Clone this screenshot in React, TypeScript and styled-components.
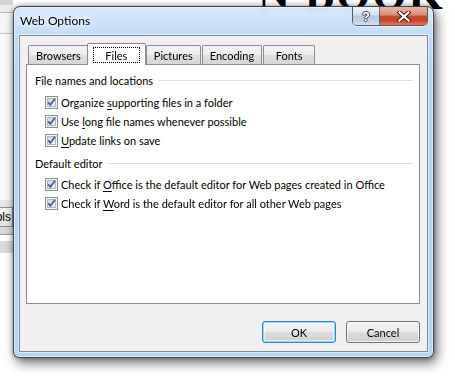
import React from "react";
import styled, { createGlobalStyle, css } from "styled-components";

const UI_FONT = `Lato, "Noto Sans", "Liberation Sans", sans-serif`;

const GlobalStyle = createGlobalStyle`
  html, body { margin: 0; padding: 0; background: #ffffff; }
  body { width: 455px; height: 378px; overflow: hidden; font-family: ${UI_FONT}; font-size: 11px; color: #000; }
  * { box-sizing: border-box; }
`;

const Desktop = styled.div`
  position: relative;
  width: 455px;
  height: 378px;
  overflow: hidden;
  background: #ffffff;
`;

/* ---------- application behind the dialog ---------- */
const BackApp = styled.div`
  position: absolute;
  left: 0;
  top: 0;
  width: 13px;
  height: 378px;
  overflow: hidden;
  display: flex;
  flex-direction: column;
`;

const Band = styled.div<{ $h: number; $bg: string }>`
  flex: none;
  height: ${(p) => p.$h}px;
  background: ${(p) => p.$bg};
`;

const ToolBand = styled.div`
  flex: none;
  height: 34px;
  display: flex;
  justify-content: flex-end;
  align-items: center;
  background: linear-gradient(#e9e9e9, #d6d6d6);
`;

const ToolsButton = styled.div`
  flex: none;
  height: 20px;
  line-height: 18px;
  padding: 0 1px 0 4px;
  border: 1px solid #8c8c8c;
  background: linear-gradient(#f7f7f7, #e3e3e3);
  font-family: "Liberation Sans", sans-serif;
  font-size: 12px;
  white-space: nowrap;
`;

const BackTitle = styled.div`
  position: absolute;
  left: 258px;
  top: -27px;
  font-family: "Liberation Serif", serif;
  font-weight: bold;
  font-size: 44px;
  line-height: 44px;
  letter-spacing: 2px;
  white-space: nowrap;
  color: #000;
`;

/* ---------- the dialog window ---------- */
const Window = styled.div`
  position: absolute;
  left: 13px;
  top: 6px;
  width: 421px;
  height: 352px;
  display: flex;
  flex-direction: column;
  padding: 0 5px 5px 5px;
  border: 1px solid rgba(35, 45, 60, 0.85);
  border-radius: 7px 7px 6px 6px;
  background:
    linear-gradient(180deg, rgba(255, 255, 255, 0.5) 0px, rgba(255, 255, 255, 0.2) 26px, rgba(255, 255, 255, 0) 60px),
    rgba(168, 204, 242, 0.85);
  backdrop-filter: blur(3px);
  box-shadow:
    inset 0 0 0 1px rgba(255, 255, 255, 0.55),
    3px 5px 12px rgba(0, 0, 0, 0.55),
    0 0 5px rgba(0, 0, 0, 0.35);
`;

const TitleBar = styled.div`
  flex: none;
  height: 28px;
  display: flex;
  align-items: flex-start;
  justify-content: space-between;
  padding-left: 1px;
`;

const Title = styled.div`
  margin-top: 7px;
  height: 14px;
  line-height: 14px;
  font-size: 12px;
  color: #000;
  text-shadow: 0 0 6px #fff, 0 0 10px rgba(255, 255, 255, 0.9);
`;

const CaptionGroup = styled.div`
  display: flex;
  height: 19px;
  border: 1px solid rgba(45, 55, 75, 0.8);
  border-top: none;
  border-radius: 0 0 5px 5px;
  overflow: hidden;
  box-shadow: 0 1px 0 rgba(255, 255, 255, 0.6);
`;

const CaptionButton = styled.div<{ $kind: "help" | "close" }>`
  display: flex;
  align-items: center;
  justify-content: center;
  height: 100%;
  ${(p) =>
    p.$kind === "help"
      ? css`
          width: 27px;
          border-right: 1px solid rgba(45, 55, 75, 0.7);
          background: linear-gradient(#eef3f9 0%, #d4dfeb 45%, #b7c8dc 50%, #c3d3e5 80%, #d7e3f0 100%);
        `
      : css`
          width: 47px;
          background: linear-gradient(#eeb3a3 0%, #dd8b74 45%, #c9492e 50%, #c6452a 75%, #de7b5c 100%);
        `}
`;

const HelpGlyph = styled.span`
  font-family: "Liberation Sans", sans-serif;
  font-weight: bold;
  font-size: 13px;
  line-height: 13px;
  color: #fff;
  text-shadow: 1px 0 0 #3d4a5c, -1px 0 0 #3d4a5c, 0 1px 0 #3d4a5c, 0 -1px 0 #3d4a5c;
`;

/* ---------- client area ---------- */
const Client = styled.div`
  flex: 1;
  display: flex;
  flex-direction: column;
  background: #f0f0f0;
  border: 1px solid #7b8b9d;
  box-shadow: 0 0 0 1px rgba(255, 255, 255, 0.5);
  padding: 7px 7px 8px 6px;
`;

const TabStrip = styled.div`
  flex: none;
  height: 21px;
  display: flex;
  align-items: flex-end;
  gap: 1px;
  padding-left: 2px;
  position: relative;
  z-index: 1;
`;

const Tab = styled.div<{ $active?: boolean }>`
  flex: none;
  min-width: 52px;
  height: 19px;
  padding: 0 7px;
  display: flex;
  align-items: center;
  justify-content: center;
  border: 1px solid #898c95;
  border-bottom: none;
  border-radius: 2px 2px 0 0;
  background: linear-gradient(#f4f4f4 0%, #ececec 50%, #e0e0e0 51%, #d6d6d6 100%);
  white-space: nowrap;
  ${(p) =>
    p.$active &&
    css`
      height: 22px;
      min-width: 59px;
      margin: 0 -1px -1px -3px;
      padding: 3px 5px 2px 5px;
      background: #ffffff;
      align-items: stretch;
    `}
`;

const FocusLabel = styled.span`
  flex: 1;
  display: flex;
  align-items: center;
  justify-content: center;
  border: 1px dotted #000;
`;

const Panel = styled.div`
  flex: 1;
  display: flex;
  flex-direction: column;
  gap: 4px;
  background: #ffffff;
  border: 1px solid #898c95;
  padding: 6px 6px 0 8px;
`;

const Section = styled.div<{ $gap: number }>`
  display: flex;
  flex-direction: column;
  gap: ${(p) => p.$gap}px;
`;

const GroupHeader = styled.div`
  height: 19px;
  display: flex;
  align-items: center;
  gap: 6px;
  white-space: nowrap;
`;

const GroupLine = styled.div`
  flex: 1;
  height: 1px;
  background: #d5dfe5;
`;

const CheckList = styled.div`
  display: flex;
  flex-direction: column;
  padding-left: 10px;
`;

const CheckRow = styled.label`
  height: 19px;
  display: flex;
  align-items: center;
  gap: 3px;
  white-space: nowrap;
`;

const Key = styled.span`
  text-decoration: underline;
  text-underline-offset: 2px;
`;

const ButtonBar = styled.div`
  flex: none;
  margin-top: 17px;
  height: 22px;
  display: flex;
  justify-content: flex-end;
  gap: 10px;
`;

const PushButton = styled.div<{ $default?: boolean }>`
  width: 74px;
  height: 22px;
  display: flex;
  align-items: center;
  justify-content: center;
  border: 1px solid #707070;
  border-radius: 3px;
  background: linear-gradient(#f2f2f2 0%, #ebebeb 50%, #dddddd 51%, #cfcfcf 100%);
  box-shadow: inset 0 0 0 1px rgba(255, 255, 255, 0.8);
  ${(p) =>
    p.$default &&
    css`
      border-color: #3c7fb1;
      box-shadow: inset 0 0 0 1px #8fdcf8, inset 0 0 0 2px rgba(255, 255, 255, 0.5);
    `}
`;

const CloseIcon = () => (
  <svg width="14" height="11" viewBox="0 0 14 11">
    <path d="M2.5 1.5 L11.5 9.5 M11.5 1.5 L2.5 9.5" stroke="#4b1a10" strokeWidth="4" strokeLinecap="square" fill="none" />
    <path d="M2.5 1.5 L11.5 9.5 M11.5 1.5 L2.5 9.5" stroke="#ffffff" strokeWidth="2.2" strokeLinecap="square" fill="none" />
  </svg>
);

const CheckBox = () => (
  <svg width="13" height="13" viewBox="0 0 13 13" style={{ flex: "none" }}>
    <defs>
      <linearGradient id="cbfill" x1="0" y1="0" x2="1" y2="1">
        <stop offset="0" stopColor="#cfd3da" />
        <stop offset="1" stopColor="#f7f7f8" />
      </linearGradient>
    </defs>
    <rect x="0.5" y="0.5" width="12" height="12" fill="#f4f4f4" stroke="#8e8f8f" />
    <rect x="2.5" y="2.5" width="8" height="8" fill="url(#cbfill)" stroke="#b4b8be" />
    <path d="M3.2 6.3 L5.4 8.8 L10 2.8" fill="none" stroke="#4a5c9a" strokeWidth="1.8" />
  </svg>
);

export default function App() {
  return (
    <Desktop>
      <GlobalStyle />
      <BackApp>
        <Band $h={5} $bg="#d3d3d3" />
        <Band $h={7} $bg="#eeeeee" />
        <Band $h={1} $bg="#b3b3b3" />
        <Band $h={20} $bg="#f6f6f6" />
        <Band $h={1} $bg="#c9c9c9" />
        <Band $h={166} $bg="#fafafa" />
        <ToolBand>
          <ToolsButton>Tools</ToolsButton>
        </ToolBand>
        <Band $h={1} $bg="#9a9a9a" />
        <Band $h={6} $bg="#ffffff" />
        <Band $h={12} $bg="#dadada" />
        <Band $h={125} $bg="#ffffff" />
      </BackApp>
      <BackTitle>N BOOK</BackTitle>

      <Window>
        <TitleBar>
          <Title>Web Options</Title>
          <CaptionGroup>
            <CaptionButton $kind="help">
              <HelpGlyph>?</HelpGlyph>
            </CaptionButton>
            <CaptionButton $kind="close">
              <CloseIcon />
            </CaptionButton>
          </CaptionGroup>
        </TitleBar>

        <Client>
          <TabStrip>
            <Tab>Browsers</Tab>
            <Tab $active>
              <FocusLabel>Files</FocusLabel>
            </Tab>
            <Tab>Pictures</Tab>
            <Tab>Encoding</Tab>
            <Tab>Fonts</Tab>
          </TabStrip>

          <Panel>
            <Section $gap={3}>
              <GroupHeader>
                File names and locations
                <GroupLine />
              </GroupHeader>
              <CheckList>
                <CheckRow>
                  <CheckBox />
                  <span>
                    Organize <Key>s</Key>upporting files in a folder
                  </span>
                </CheckRow>
                <CheckRow>
                  <CheckBox />
                  <span>
                    Use <Key>l</Key>ong file names whenever possible
                  </span>
                </CheckRow>
                <CheckRow>
                  <CheckBox />
                  <span>
                    <Key>U</Key>pdate links on save
                  </span>
                </CheckRow>
              </CheckList>
            </Section>
            <Section $gap={2}>
              <GroupHeader>
                Default editor
                <GroupLine />
              </GroupHeader>
              <CheckList>
                <CheckRow>
                  <CheckBox />
                  <span>
                    Check if <Key>O</Key>ffice is the default editor for Web pages created in Office
                  </span>
                </CheckRow>
                <CheckRow>
                  <CheckBox />
                  <span>
                    Check if <Key>W</Key>ord is the default editor for all other Web pages
                  </span>
                </CheckRow>
              </CheckList>
            </Section>
          </Panel>

          <ButtonBar>
            <PushButton $default>OK</PushButton>
            <PushButton>Cancel</PushButton>
          </ButtonBar>
        </Client>
      </Window>
    </Desktop>
  );
}
